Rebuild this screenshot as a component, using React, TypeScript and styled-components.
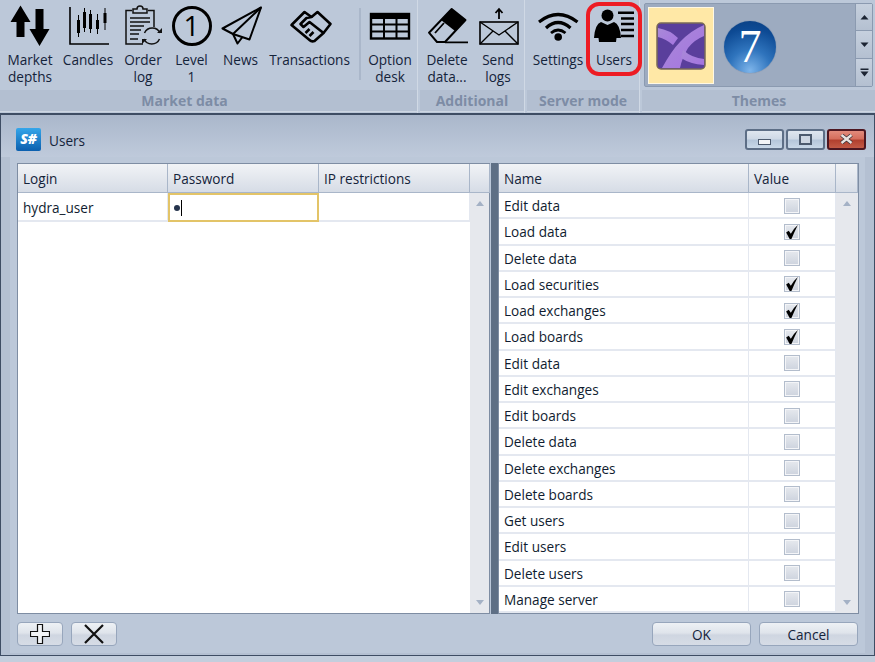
import { FC, ReactNode } from 'react'
import styled, { createGlobalStyle } from 'styled-components'

const GlobalStyle = createGlobalStyle`
  html, body {
    margin: 0;
    padding: 0;
    width: 875px;
    height: 662px;
    overflow: hidden;
    background: #c3cedd;
    font-family: "Open Sans", "Noto Sans", sans-serif;
    font-size: 13.6px;
    color: #14233a;
  }
`;

const Page = styled.div`
  width: 875px;
  height: 662px;
  display: flex;
  flex-direction: column;
`;

const Ribbon = styled.div`
  height: 113px;
  flex: none;
  display: flex;
  background: #bcc8d9;
`;

const Group = styled.div<{ $w: number }>`
  width: ${({ $w }) => $w}px;
  flex: none;
  display: flex;
  flex-direction: column;
  margin-right: 2px;
  border-right: 1px solid #d0d9e5;
  box-sizing: border-box;
`;

const GroupBody = styled.div<{ $left: number }>`
  height: 90px;
  display: flex;
  gap: 5px;
  padding-left: ${({ $left }) => $left}px;
  position: relative;
`;

const GroupLabel = styled.div<{ $right?: number }>`
  height: 21px;
  background: #b3bfd1;
  color: #7d8ca5;
  font-weight: 700;
  font-size: 14px;
  line-height: 21px;
  text-align: center;
  border-bottom: 1px solid #cdd6e2;
  padding-right: ${({ $right }) => $right ?? 0}px;
`;

const ToolButton = styled.div<{ $w: number }>`
  width: ${({ $w }) => $w}px;
  flex: none;
  display: flex;
  flex-direction: column;
  align-items: center;
  text-align: center;
  line-height: 16.5px;
  white-space: pre-line;
  padding-top: 3px;
  position: relative;

  svg { flex: none; display: block; }
`;

const ToolLabel = styled.div`
  margin-top: 5px;
`;

const Highlight = styled.div`
  position: absolute;
  left: -5px;
  top: 2px;
  width: 56px;
  height: 74px;
  box-sizing: border-box;
  border: 4px solid #ed1c24;
  border-radius: 13px;
`;

const RibbonDivider = styled.div`
  width: 2px;
  height: 72px;
  margin: 8px -1px 0 3px;
  background: #aab7ca;
  flex: none;
`;

const LevelCircle = styled.div`
  width: 40px;
  height: 40px;
  margin: 3px 0 1px;
  box-sizing: border-box;
  border: 3px solid #000;
  border-radius: 50%;
  color: #000;
  font-size: 28px;
  line-height: 33px;
  text-align: center;
  flex: none;
`;

const Gallery = styled.div`
  margin: 3px 3px 3px 2px;
  height: 84px;
  box-sizing: border-box;
  display: flex;
  background: #9dabc0;
  border: 1px solid #8b9ab0;
  border-radius: 2px;
  position: relative;
`;

const ThemeTile = styled.div<{ $selected?: boolean }>`
  width: 66px;
  height: 77px;
  margin: 3px 0 0 3px;
  box-sizing: border-box;
  flex: none;
  display: flex;
  align-items: center;
  justify-content: center;
  background: ${({ $selected }) => ($selected ? '#ffe8a6' : 'transparent')};
  border: 1px solid ${({ $selected }) => ($selected ? '#fff8e4' : 'transparent')};
`;

const Orb = styled.div`
  width: 52px;
  height: 52px;
  margin: 2px 0 0 0;
  border-radius: 50%;
  background: radial-gradient(circle at 50% 95%, #7db4ea 0%, #2f74bd 38%, #0d4a94 75%, #0a3d7e 100%);
  box-shadow: 0 0 1px #40648f;
  color: #fff;
  font-family: "Liberation Serif", serif;
  font-size: 46px;
  line-height: 52px;
  text-align: center;
`;

const GalleryScroll = styled.div`
  margin-left: auto;
  width: 16px;
  flex: none;
  display: grid;
  grid-template-rows: repeat(3, 1fr);
  border-left: 1px solid #8b9ab0;
`;

const GalleryButton = styled.div`
  background: linear-gradient(#c6d0de, #b4c0d1);
  border-bottom: 1px solid #8b9ab0;
  display: flex;
  align-items: center;
  justify-content: center;

  &:last-child { border-bottom: none; }
`;

const Window = styled.div`
  width: 875px;
  height: 543px;
  flex: none;
  box-sizing: border-box;
  border: 2px solid #3e4d64;
  border-bottom-width: 1px;
  border-right-width: 1px;
  border-left-width: 1px;
  background: #b4c0d2;
  display: flex;
  flex-direction: column;
`;

const TitleBar = styled.div`
  height: 42px;
  flex: none;
  box-sizing: border-box;
  display: flex;
  align-items: center;
  padding: 6px 8px 0 15px;
  background: linear-gradient(#aab7cb, #bfcadb);
`;

const AppLogo = styled.div`
  width: 25px;
  height: 23px;
  border-radius: 2px;
  background: linear-gradient(#35a6ea, #0b5fae);
  color: #fff;
  font-weight: 800;
  font-style: italic;
  font-size: 14px;
  line-height: 22px;
  text-align: center;
`;

const TitleText = styled.div`
  margin: 2px 0 0 8px;
  color: #14233a;
`;

const WindowButtons = styled.div`
  margin-left: auto;
  display: flex;
  gap: 2px;
`;

const WindowButton = styled.div<{ $close?: boolean }>`
  width: 39px;
  height: 21px;
  box-sizing: border-box;
  border: 2px solid ${({ $close }) => ($close ? '#4d1620' : '#5d6e86')};
  border-radius: 3px;
  background: ${({ $close }) =>
    $close
      ? 'linear-gradient(#e28b7c 0%, #d56e5d 45%, #b2402f 55%, #c35a46 100%)'
      : 'linear-gradient(#dfe6ef 0%, #cfd9e6 45%, #b5c6da 55%, #c9d8e8 100%)'};
  display: flex;
  align-items: center;
  justify-content: center;
`;

const MinGlyph = styled.div`
  width: 11px;
  height: 4px;
  background: #f2f4f7;
  border: 1px solid #4c5a6e;
  margin-top: 5px;
`;

const MaxGlyph = styled.div`
  width: 9px;
  height: 7px;
  border: 2px solid #4c5a6e;
  background: #cdd6e2;
`;

const Content = styled.div`
  flex: 1;
  margin: 0 9px 2px 9px;
  padding: 6px 7px 7px;
  background: #bcc8d9;
  display: flex;
  flex-direction: column;
`;

const Split = styled.div`
  height: 451px;
  flex: none;
  display: flex;
`;

const Splitter = styled.div`
  width: 7px;
  margin-left: 1px;
  background: #5e6f85;
  flex: none;
`;

const Grid = styled.div<{ $w: number; $cols: string }>`
  --cols: ${({ $cols }) => $cols};
  width: ${({ $w }) => $w}px;
  flex: none;
  box-sizing: border-box;
  border: 1px solid #7e8da3;
  background: #fff;
  display: flex;
  flex-direction: column;
  position: relative;
`;

const HeaderRow = styled.div`
  height: 29px;
  flex: none;
  display: grid;
  grid-template-columns: var(--cols);
  background: linear-gradient(#f1f3f6, #d6dce6);
  border-bottom: 1px solid #a9b6c9;
  box-sizing: border-box;
`;

const HeaderCell = styled.div`
  padding-left: 5px;
  line-height: 29px;
  border-right: 1px solid #a9b6c9;
  color: #14233a;
`;

const Rows = styled.div<{ $count: number }>`
  flex: 1;
  display: grid;
  grid-template-rows: repeat(${({ $count }) => $count}, 1fr);
  min-height: 0;
`;

const LeftRows = styled.div`
  flex: 1;
`;

const Row = styled.div`
  display: grid;
  grid-template-columns: var(--cols);
  min-height: 0;
`;

const LeftRow = styled(Row)`
  height: 29px;
`;

const Cell = styled.div<{ $center?: boolean }>`
  padding-left: ${({ $center }) => ($center ? 0 : 5)}px;
  padding-top: 1px;
  display: flex;
  align-items: center;
  justify-content: ${({ $center }) => ($center ? 'center' : 'flex-start')};
  border-bottom: 2px solid #e4e8f0;
  border-right: 1px solid #e4e8f0;
  color: #101c30;
`;

const EditCell = styled(Cell)`
  border: 2px solid #e3c468;
  padding-left: 3px;
`;

const PasswordDot = styled.span`
  width: 6px;
  height: 6px;
  margin-left: 1px;
  border-radius: 50%;
  background: #26344d;
`;

const Caret = styled.span`
  width: 1px;
  height: 16px;
  margin-left: 1px;
  background: #000;
`;

const Check = styled.div`
  width: 16px;
  height: 16px;
  box-sizing: border-box;
  border: 1px solid #b3bdcc;
  background: linear-gradient(#e6e9ee, #cdd3de);
  box-shadow: inset 0 0 0 1px #f4f5f8;
  display: flex;
  align-items: center;
  justify-content: center;
`;

const Scrollbar = styled.div<{ $left: number }>`
  position: absolute;
  top: 29px;
  bottom: 0;
  left: ${({ $left }) => $left}px;
  right: 0;
  background: #e6e8ed;
  display: flex;
  flex-direction: column;
  justify-content: space-between;
  align-items: center;
  padding: 8px 0;
`;

const ArrowUp = styled.div`
  width: 0;
  height: 0;
  border-left: 4px solid transparent;
  border-right: 4px solid transparent;
  border-bottom: 5px solid #a4b1c5;
`;

const ArrowDown = styled(ArrowUp)`
  border-bottom: none;
  border-top: 5px solid #a4b1c5;
`;

const Footer = styled.div`
  display: flex;
  margin-top: 8px;
  gap: 8px;
`;

const DialogButton = styled.div<{ $w: number; $pushRight?: boolean }>`
  width: ${({ $w }) => $w}px;
  height: 24px;
  box-sizing: border-box;
  border: 1px solid #97a6bc;
  border-radius: 4px;
  background: linear-gradient(#eef1f5 0%, #dfe4eb 45%, #cfd6e1 55%, #d6dce6 100%);
  display: flex;
  align-items: center;
  justify-content: center;
  color: #14233a;
  ${({ $pushRight }) => $pushRight && 'margin-left: auto;'}
`;

const Tool: FC<{ w: number; label?: string; children: ReactNode; extra?: ReactNode }> = ({ w, label, children, extra }) => (
  <ToolButton $w={w}>
    {children}
    <ToolLabel>{label}</ToolLabel>
    {extra}
  </ToolButton>
);

const IconSvg = styled.svg`
  overflow: visible;
`;

// icons are drawn in the page coordinates read from the reference, cut to a 52x44 frame
const Icon: FC<{ cx: number; children: ReactNode }> = ({ cx, children }) => (
  <IconSvg width="52" height="44" viewBox={`${cx - 26} 3 52 44`}>
    {children}
  </IconSvg>
);

const MarketDepthsIcon = () => (
  <Icon cx={30}>
    <path d="M20.5 5.5 L30.5 22 L24.5 22 V37 H16.5 V22 L10.5 22 Z" fill="#000" />
    <path d="M39.5 46 L49.5 29 H43.5 V9 H35.5 V29 H29.5 Z" fill="#000" />
  </Icon>
);

const CandlesIcon = () => {
  const candles = [
    [78.5, 15, 37, 20, 33],
    [84.5, 8, 32, 12, 28],
    [90.5, 10, 33, 14, 29],
    [97.5, 14, 34, 20, 29],
    [105, 8, 30, 13, 23],
  ];
  return (
    <Icon cx={88}>
      <path d="M70 7 V44 H109" fill="none" stroke="#000" strokeWidth="1.6" />
      {candles.map(([x, y1, y2, y3, y4]) => (
        <g key={x}>
          <line x1={x} x2={x} y1={y1} y2={y2} stroke="#000" strokeWidth="1" />
          <rect x={x - 1.5} y={y3} width="3" height={y4 - y3} fill="#000" />
        </g>
      ))}
    </Icon>
  );
};

const OrderLogIcon = () => (
  <Icon cx={143}>
    <path d="M132 10.5 H126 V44 H143 M148 10.5 H154 V27" fill="none" stroke="#111" strokeWidth="1.5" />
    <path d="M133 13 V9 H137 Q137 6 140 6 Q143 6 143 9 H147 V13 Z" fill="none" stroke="#111" strokeWidth="1.5" />
    <path d="M130 18 H150 M130 22 H150 M130 26 H144 M130 30 H141 M130 34 H139 M130 39 H138" stroke="#111" strokeWidth="1.3" />
    <path d="M144.5 33 A8.5 8.5 0 0 1 160 33" fill="none" stroke="#111" strokeWidth="1.5" />
    <path d="M159.5 39 A8.5 8.5 0 0 1 144 39" fill="none" stroke="#111" strokeWidth="1.5" />
    <path d="M157 33 H162 V28 Z M147 39 H142 V44 Z" fill="#111" />
  </Icon>
);

const NewsIcon = () => (
  <Icon cx={240.5}>
    <path d="M260.5 7.5 L222 28.5 L232.5 34 L249 39.5 Z" fill="none" stroke="#000" strokeWidth="2" strokeLinejoin="round" />
    <path d="M260.5 7.5 L232.5 34 L237 43.5 L242 37" fill="none" stroke="#000" strokeWidth="2" strokeLinejoin="round" />
  </Icon>
);

const TransactionsIcon = () => (
  <Icon cx={309.5}>
    <path
      d="M291 25 L304 12 L311 17 L306 18 L300 24 L303 27 L309 22 L323 33 L314 41 Q311 42 309 40 L291 25 Z"
      fill="none"
      stroke="#000"
      strokeWidth="2.6"
      strokeLinejoin="round"
    />
    <path d="M311 17 L317 12 L330 24 L323 33 M309 36 L313 32 M305 33 L309 29" fill="none" stroke="#000" strokeWidth="2.6" strokeLinejoin="round" />
  </Icon>
);

const OptionDeskIcon = () => (
  <Icon cx={390}>
    <rect x="371" y="14" width="38" height="24.5" fill="none" stroke="#000" strokeWidth="2.4" />
    <path d="M371 17 H409" stroke="#000" strokeWidth="4" />
    <path d="M371 24.5 H409 M371 31.5 H409 M384 14 V38 M396.5 14 V38" stroke="#000" strokeWidth="2" />
  </Icon>
);

const EraserIcon = () => (
  <Icon cx={447}>
    <path d="M451.7 9 L465.5 20 L445 42 L437 42 L429 32.7 Z" fill="none" stroke="#000" strokeWidth="2" strokeLinejoin="round" />
    <path d="M451.7 9 L465.5 20 L455 31 L441 20 Z" fill="#000" />
    <path d="M435 33 L444 23 M445 42.3 H468" stroke="#000" strokeWidth="1.8" fill="none" />
  </Icon>
);

const SendLogsIcon = () => (
  <Icon cx={498}>
    <rect x="480" y="22" width="38" height="22" fill="none" stroke="#000" strokeWidth="1.6" />
    <path d="M480 22 L499 35 L518 22 M480 44 L493 31 M518 44 L505 31" fill="none" stroke="#000" strokeWidth="1.4" />
    <path d="M499 19 V10 M495.5 13 L499 9 L502.5 13" fill="none" stroke="#000" strokeWidth="1.8" />
  </Icon>
);

const SettingsIcon = () => (
  <Icon cx={558}>
    <path d="M539 22 Q558 7 577.5 22" fill="none" stroke="#000" strokeWidth="3.2" />
    <path d="M546 28 Q558 17 570.5 28" fill="none" stroke="#000" strokeWidth="3.2" />
    <path d="M551 33 Q558 27 565.5 33" fill="none" stroke="#000" strokeWidth="2.8" />
    <circle cx="558.2" cy="37" r="3.8" fill="#000" />
  </Icon>
);

const UsersIcon = () => (
  <Icon cx={614}>
    <circle cx="607.5" cy="15.5" r="6" fill="#000" />
    <path d="M594 38 Q595 24 601 22 L607.5 25 L614 22 Q620 24 621 38 L616.5 38 L616 42 H599 L598.5 38 Z" fill="#000" />
    <path d="M618 12.7 H634 M621 18.5 H634 M621 24 H634 M621 30 H634 M621 36 H634" stroke="#000" strokeWidth="2.6" />
  </Icon>
);

const ThemeLogo = () => (
  <svg width="50" height="48" viewBox="0 0 50 48">
    <defs>
      <linearGradient id="tileBand" x1="0" y1="0" x2="1" y2="1">
        <stop offset="0" stopColor="#a98ad8" />
        <stop offset="1" stopColor="#a574e0" />
      </linearGradient>
    </defs>
    <rect x="1" y="1" width="48" height="46" rx="4" fill="#5a3f9c" stroke="#7a6a58" strokeWidth="1.5" />
    <path d="M6 46 Q16 28 24 20 Q34 9 48 3 V14 Q38 18 32 26 Q26 36 24 46 Z" fill="url(#tileBand)" />
    <path d="M2 6 Q14 8 22 16 L17 23 Q10 17 2 15 Z" fill="url(#tileBand)" />
    <path d="M27 28 Q36 36 48 37 V43 Q34 42 25 36 Z" fill="url(#tileBand)" />
  </svg>
);

const ScrollGlyph: FC<{ kind: 'up' | 'down' | 'more' }> = ({ kind }) => (
  <svg width="9" height="9" viewBox="0 0 9 9">
    {kind === 'up' && <path d="M0.5 6.5 L4.5 2 L8.5 6.5 Z" fill="#1c2433" />}
    {kind === 'down' && <path d="M0.5 2.5 L4.5 7 L8.5 2.5 Z" fill="#1c2433" />}
    {kind === 'more' && <path d="M0.5 0.5 H8.5 V2 H0.5 Z M0.5 3.5 H8.5 L4.5 8.5 Z" fill="#1c2433" />}
  </svg>
);

const CheckMark = () => (
  <svg width="14" height="14" viewBox="0 0 12 12">
    <path d="M1 6.5 L3.2 5 L5 7.5 Q7 3.5 11 0 Q8 6 5.5 12 H4 Z" fill="#000" />
  </svg>
);

const PlusIcon = () => (
  <svg width="20" height="20" viewBox="0 0 20 20">
    <path d="M7.5 0.5 H12.5 V7.5 H19.5 V12.5 H12.5 V19.5 H7.5 V12.5 H0.5 V7.5 H7.5 Z" fill="#f2f4f7" stroke="#111" strokeWidth="1.2" />
  </svg>
);

const CrossIcon = () => (
  <svg width="20" height="20" viewBox="0 0 20 20">
    <path d="M1 1 L19 19 M19 1 L1 19" stroke="#111" strokeWidth="2.2" />
  </svg>
);

const CloseGlyph = () => (
  <svg width="13" height="10" viewBox="0 0 13 10">
    <path d="M1.5 1 L11.5 9 M11.5 1 L1.5 9" stroke="#3a3036" strokeWidth="4" />
    <path d="M1.5 1 L11.5 9 M11.5 1 L1.5 9" stroke="#e9e2e0" strokeWidth="2.4" />
  </svg>
);

const permissions: [string, boolean][] = [
  ['Edit data', false],
  ['Load data', true],
  ['Delete data', false],
  ['Load securities', true],
  ['Load exchanges', true],
  ['Load boards', true],
  ['Edit data', false],
  ['Edit exchanges', false],
  ['Edit boards', false],
  ['Delete data', false],
  ['Delete exchanges', false],
  ['Delete boards', false],
  ['Get users', false],
  ['Edit users', false],
  ['Delete users', false],
  ['Manage server', false],
];

const App = () => (
  <Page>
    <GlobalStyle />
    <Ribbon>
      <Group $w={418}>
        <GroupBody $left={5}>
          <Tool w={50} label={'Market\ndepths'}><MarketDepthsIcon /></Tool>
          <Tool w={56} label="Candles"><CandlesIcon /></Tool>
          <Tool w={44} label={'Order\nlog'}><OrderLogIcon /></Tool>
          <Tool w={43} label={'Level\n1'}><LevelCircle>1</LevelCircle></Tool>
          <Tool w={45} label="News"><NewsIcon /></Tool>
          <Tool w={83} label="Transactions"><TransactionsIcon /></Tool>
          <RibbonDivider />
          <Tool w={50} label={'Option\ndesk'}><OptionDeskIcon /></Tool>
        </GroupBody>
        <GroupLabel $right={48}>Market data</GroupLabel>
      </Group>
      <Group $w={105}>
        <GroupBody $left={5}>
          <Tool w={44} label={'Delete\ndata...'}><EraserIcon /></Tool>
          <Tool w={48} label={'Send\nlogs'}><SendLogsIcon /></Tool>
        </GroupBody>
        <GroupLabel>Additional</GroupLabel>
      </Group>
      <Group $w={113}>
        <GroupBody $left={3}>
          <Tool w={56} label="Settings"><SettingsIcon /></Tool>
          <Tool w={46} label="Users" extra={<Highlight />}><UsersIcon /></Tool>
        </GroupBody>
        <GroupLabel>Server mode</GroupLabel>
      </Group>
      <Group $w={235}>
        <Gallery>
          <ThemeTile $selected><ThemeLogo /></ThemeTile>
          <ThemeTile><Orb>7</Orb></ThemeTile>
          <GalleryScroll>
            <GalleryButton><ScrollGlyph kind="up" /></GalleryButton>
            <GalleryButton><ScrollGlyph kind="down" /></GalleryButton>
            <GalleryButton><ScrollGlyph kind="more" /></GalleryButton>
          </GalleryScroll>
        </Gallery>
        <GroupLabel>Themes</GroupLabel>
      </Group>
    </Ribbon>
    <Window>
      <TitleBar>
        <AppLogo>S#</AppLogo>
        <TitleText>Users</TitleText>
        <WindowButtons>
          <WindowButton><MinGlyph /></WindowButton>
          <WindowButton><MaxGlyph /></WindowButton>
          <WindowButton $close><CloseGlyph /></WindowButton>
        </WindowButtons>
      </TitleBar>
      <Content>
        <Split>
          <Grid $w={473} $cols="150px 151px 151px 20px">
            <HeaderRow>
              <HeaderCell>Login</HeaderCell>
              <HeaderCell>Password</HeaderCell>
              <HeaderCell>IP restrictions</HeaderCell>
              <HeaderCell />
            </HeaderRow>
            <LeftRows>
              <LeftRow>
                <Cell>hydra_user</Cell>
                <EditCell><PasswordDot /><Caret /></EditCell>
                <Cell />
              </LeftRow>
            </LeftRows>
            <Scrollbar $left={452}><ArrowUp /><ArrowDown /></Scrollbar>
          </Grid>
          <Splitter />
          <Grid $w={361} $cols="250px 87px 22px">
            <HeaderRow>
              <HeaderCell>Name</HeaderCell>
              <HeaderCell>Value</HeaderCell>
              <HeaderCell />
            </HeaderRow>
            <Rows $count={permissions.length}>
              {permissions.map(([name, on], i) => (
                <Row key={i}>
                  <Cell>{name}</Cell>
                  <Cell $center><Check>{on && <CheckMark />}</Check></Cell>
                </Row>
              ))}
            </Rows>
            <Scrollbar $left={337}><ArrowUp /><ArrowDown /></Scrollbar>
          </Grid>
        </Split>
        <Footer>
          <DialogButton $w={46}><PlusIcon /></DialogButton>
          <DialogButton $w={46}><CrossIcon /></DialogButton>
          <DialogButton $w={99} $pushRight>OK</DialogButton>
          <DialogButton $w={99}>Cancel</DialogButton>
        </Footer>
      </Content>
    </Window>
  </Page>
);

export default App
